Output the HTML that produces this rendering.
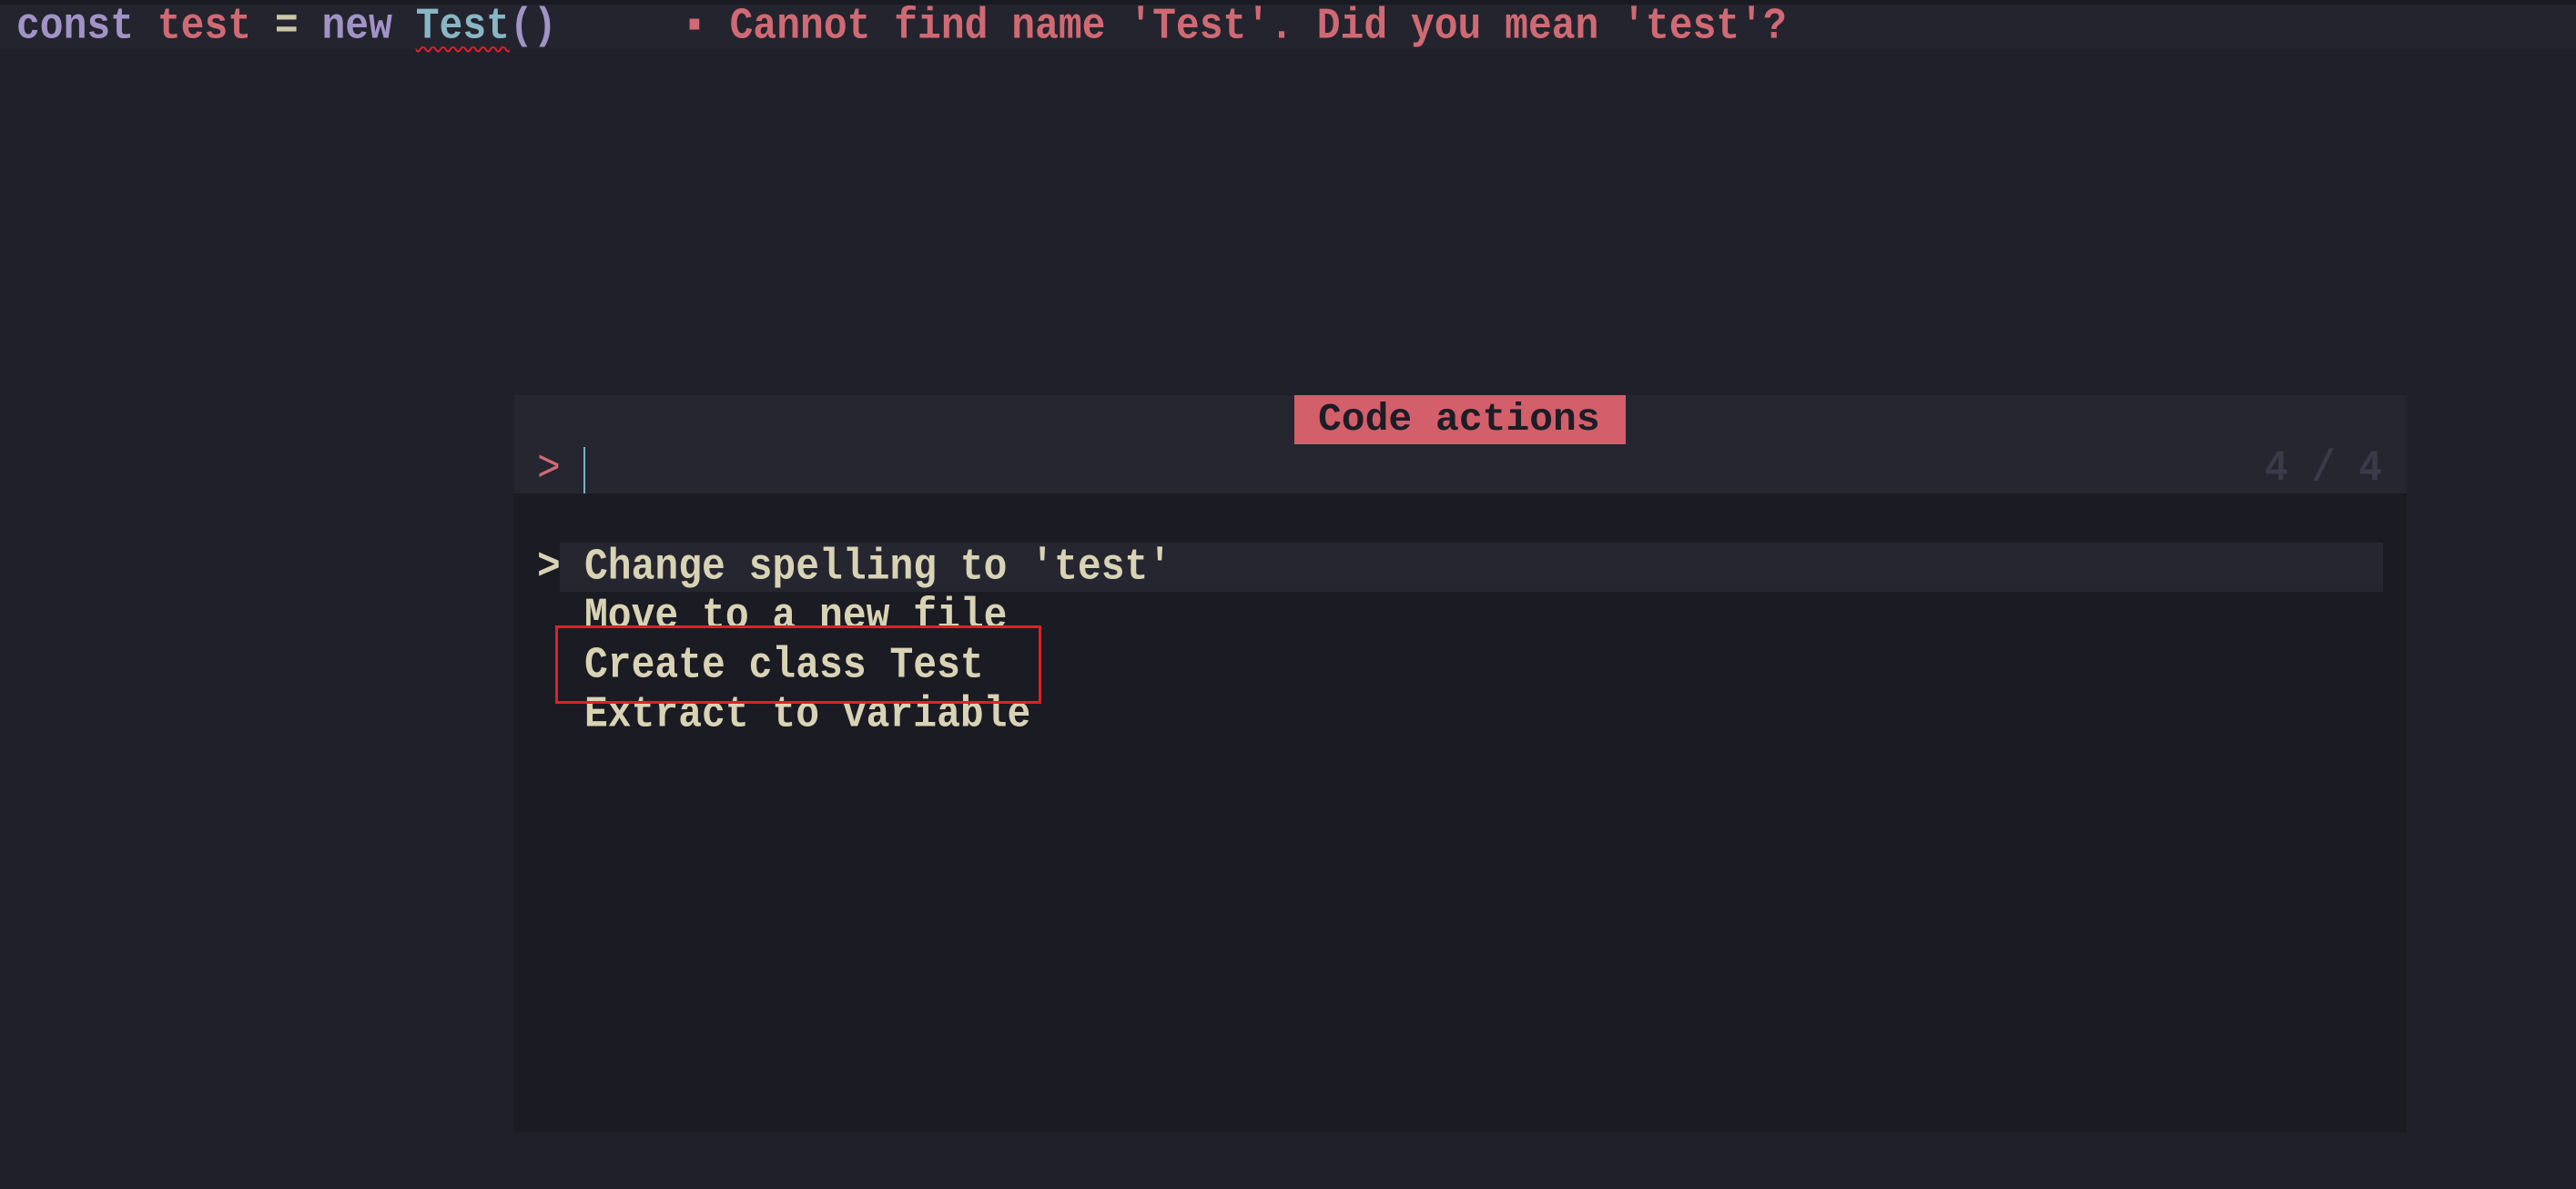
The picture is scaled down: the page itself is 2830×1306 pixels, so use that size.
<!DOCTYPE html>
<html><head><meta charset="utf-8"><style>
*{margin:0;padding:0;box-sizing:border-box}
body{width:2830px;height:1306px;background:#20202a;overflow:hidden;position:relative;font-family:"Liberation Mono",monospace;font-size:43px}
.a{position:absolute;white-space:pre;line-height:54px;font-weight:bold;transform:scaleY(1.12);transform-origin:left center}
.top{position:absolute;left:0;top:0;width:2830px;height:54px;background:#24242e}
.topline{position:absolute;left:0;top:0;width:2830px;height:5px;background:#1a1b22}
</style></head><body>
<div class="top"></div><div class="topline"></div>
<div class="a" style="left:18px;top:2px;color:#a193c6"><span>const</span> <span style="color:#cf6a74">test</span> <span style="color:#cbc7a8">=</span> new <span style="color:#89b6c4;text-decoration:underline wavy #e0202a;text-decoration-thickness:2px;text-underline-offset:8px">Test</span>()</div>
<div class="a" style="left:750px;top:2px;color:#cf6a74">▪ Cannot find name 'Test'. Did you mean 'test'?</div>

<div style="position:absolute;left:565px;top:434px;width:2079px;height:810px;background:#1b1b23"></div>
<div style="position:absolute;left:565px;top:434px;width:2079px;height:108px;background:#262631"></div>
<div class="a" style="left:1422px;top:434px;width:364px;height:54px;background:#d35f6b;color:#1d1d25;font-weight:bold;padding-left:26px;transform:none">Code actions</div>
<div class="a" style="left:590px;top:488px;color:#cf6a74;font-weight:normal">&gt;</div>
<div style="position:absolute;left:641px;top:491px;width:2px;height:51px;background:#6fb3c6"></div>
<div class="a" style="left:2488px;top:488px;color:#3a3a48;font-weight:bold">4 / 4</div>

<div style="position:absolute;left:615px;top:596px;width:2003px;height:54px;background:#262631"></div>
<div class="a" style="left:590px;top:596px;color:#d8d3b4;font-weight:bold">&gt;</div>
<div class="a" style="left:642px;top:596px;color:#d8d3b4">Change spelling to 'test'</div>
<div class="a" style="left:642px;top:650px;color:#d8d3b4">Move to a new file</div>
<div class="a" style="left:642px;top:704px;color:#d8d3b4">Create class Test</div>
<div class="a" style="left:642px;top:758px;color:#d8d3b4">Extract to variable</div>
<div style="position:absolute;left:610px;top:687px;width:534px;height:86px;border:3px solid #e0202a"></div>
</body></html>
